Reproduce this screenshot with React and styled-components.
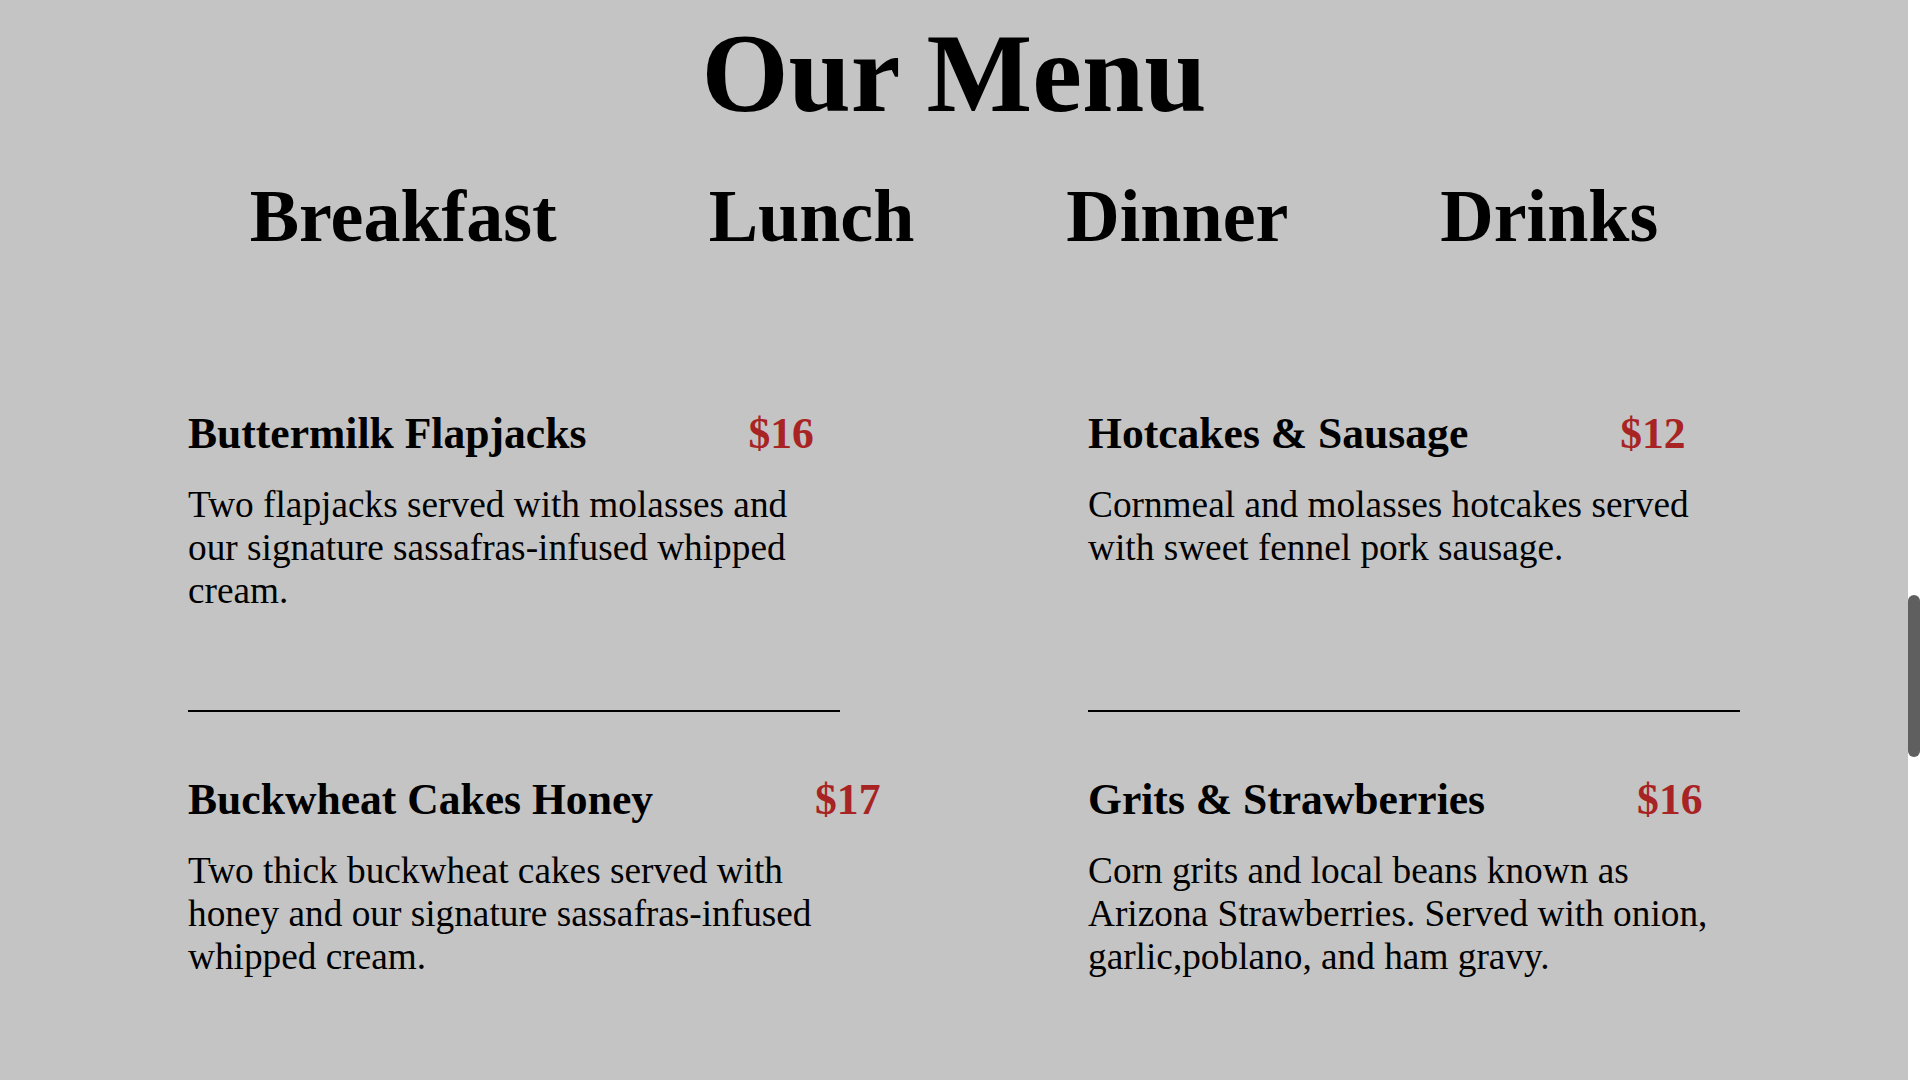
import React, { useLayoutEffect, useRef, useState, useCallback } from 'react';
import styled, { createGlobalStyle } from 'styled-components';

const GlobalStyle = createGlobalStyle`
  html, body {
    margin: 0;
    padding: 0;
    height: 100%;
    overflow: hidden;
    background: #c4c4c4;
  }
  body {
    font-family: "Liberation Serif", "Times New Roman", serif;
    color: #000;
  }
  #root { height: 100%; }
`;

const Frame = styled.div`
  display: flex;
  height: 100vh;
  background: #c4c4c4;
`;

const Viewport = styled.div`
  flex: 1;
  min-width: 0;
  height: 100%;
  overflow-y: scroll;
  scrollbar-width: none;
  &::-webkit-scrollbar { display: none; }
`;

const ScrollRail = styled.div`
  position: relative;
  flex: 0 0 12px;
  height: 100%;
  background: #ffffff;
`;

const ScrollThumb = styled.div`
  position: absolute;
  left: 0;
  right: 0;
  border-radius: 6px;
  background: #5f5f5f;
`;

const PageRest = styled.div`
  height: ${(p) => p.$h}px;
`;

const MenuSection = styled.section`
  display: flex;
  flex-direction: column;
`;

const Title = styled.h1`
  margin: 9px 0 0;
  text-align: center;
  font-size: 112px;
  line-height: 128px;
  font-weight: 700;
`;

const Tabs = styled.nav`
  margin-top: 37px;
  display: flex;
  justify-content: center;
  gap: 152px;
`;

const Tab = styled.span`
  font-size: 74px;
  line-height: 85px;
  font-weight: 700;
  cursor: pointer;
`;

const Board = styled.div`
  margin-top: 87px;
  padding-left: 188px;
  display: flex;
  gap: 248px;
`;

const Column = styled.div`
  width: 652px;
  display: flex;
  flex-direction: column;
`;

const Item = styled.article`
  box-sizing: border-box;
  height: 366px;
  padding-top: 62px;
  border-bottom: 2px solid #000;

  &:last-child { border-bottom: none; }
`;

const ItemHead = styled.div`
  display: flex;
  align-items: baseline;
  gap: ${(p) => p.$gap}px;
  font-size: 43.6px;
  line-height: 50px;
  font-weight: 700;
`;

const Name = styled.h3`
  margin: 0;
  font-size: inherit;
  font-weight: inherit;
  white-space: nowrap;
`;

const Price = styled.span`
  color: #a82323;
  white-space: nowrap;
`;

const Desc = styled.p`
  margin: 25px 0 0;
  font-size: 37.3px;
  line-height: 43px;
`;

const columns = [
  {
    gap: 162,
    items: [
      {
        name: 'Buttermilk Flapjacks',
        price: '$16',
        desc: 'Two flapjacks served with molasses and our signature sassafras-infused whipped cream.',
      },
      {
        name: 'Buckwheat Cakes Honey',
        price: '$17',
        desc: 'Two thick buckwheat cakes served with honey and our signature sassafras-infused whipped cream.',
      },
    ],
  },
  {
    gap: 152,
    items: [
      {
        name: 'Hotcakes & Sausage',
        price: '$12',
        desc: 'Cornmeal and molasses hotcakes served with sweet fennel pork sausage.',
      },
      {
        name: 'Grits & Strawberries',
        price: '$16',
        desc: 'Corn grits and local beans known as Arizona Strawberries. Served with onion, garlic,poblano, and ham gravy.',
      },
    ],
  },
];

const ABOVE = 3967;
const BELOW = 2155;

export default function App() {
  const ref = useRef(null);
  const [thumb, setThumb] = useState({ top: 595, height: 162 });

  const measure = useCallback(() => {
    const el = ref.current;
    if (!el) return;
    const { scrollTop, scrollHeight, clientHeight } = el;
    if (scrollHeight <= clientHeight) return;
    const height = Math.max(24, (clientHeight * clientHeight) / scrollHeight);
    const top = (scrollTop / (scrollHeight - clientHeight)) * (clientHeight - height);
    setThumb({ top, height });
  }, []);

  useLayoutEffect(() => {
    if (ref.current) ref.current.scrollTop = ABOVE;
    measure();
  }, [measure]);

  return (
    <>
      <GlobalStyle />
      <Frame>
        <Viewport ref={ref} onScroll={measure}>
          <PageRest $h={ABOVE} />
          <MenuSection id="menu">
            <Title>Our Menu</Title>
            <Tabs>
              <Tab>Breakfast</Tab>
              <Tab>Lunch</Tab>
              <Tab>Dinner</Tab>
              <Tab>Drinks</Tab>
            </Tabs>
            <Board>
              {columns.map((col, ci) => (
                <Column key={ci}>
                  {col.items.map((it) => (
                    <Item key={it.name}>
                      <ItemHead $gap={col.gap}>
                        <Name>{it.name}</Name>
                        <Price>{it.price}</Price>
                      </ItemHead>
                      <Desc>{it.desc}</Desc>
                    </Item>
                  ))}
                </Column>
              ))}
            </Board>
          </MenuSection>
          <PageRest $h={BELOW} />
        </Viewport>
        <ScrollRail>
          <ScrollThumb style={{ top: thumb.top, height: thumb.height }} />
        </ScrollRail>
      </Frame>
    </>
  );
}
